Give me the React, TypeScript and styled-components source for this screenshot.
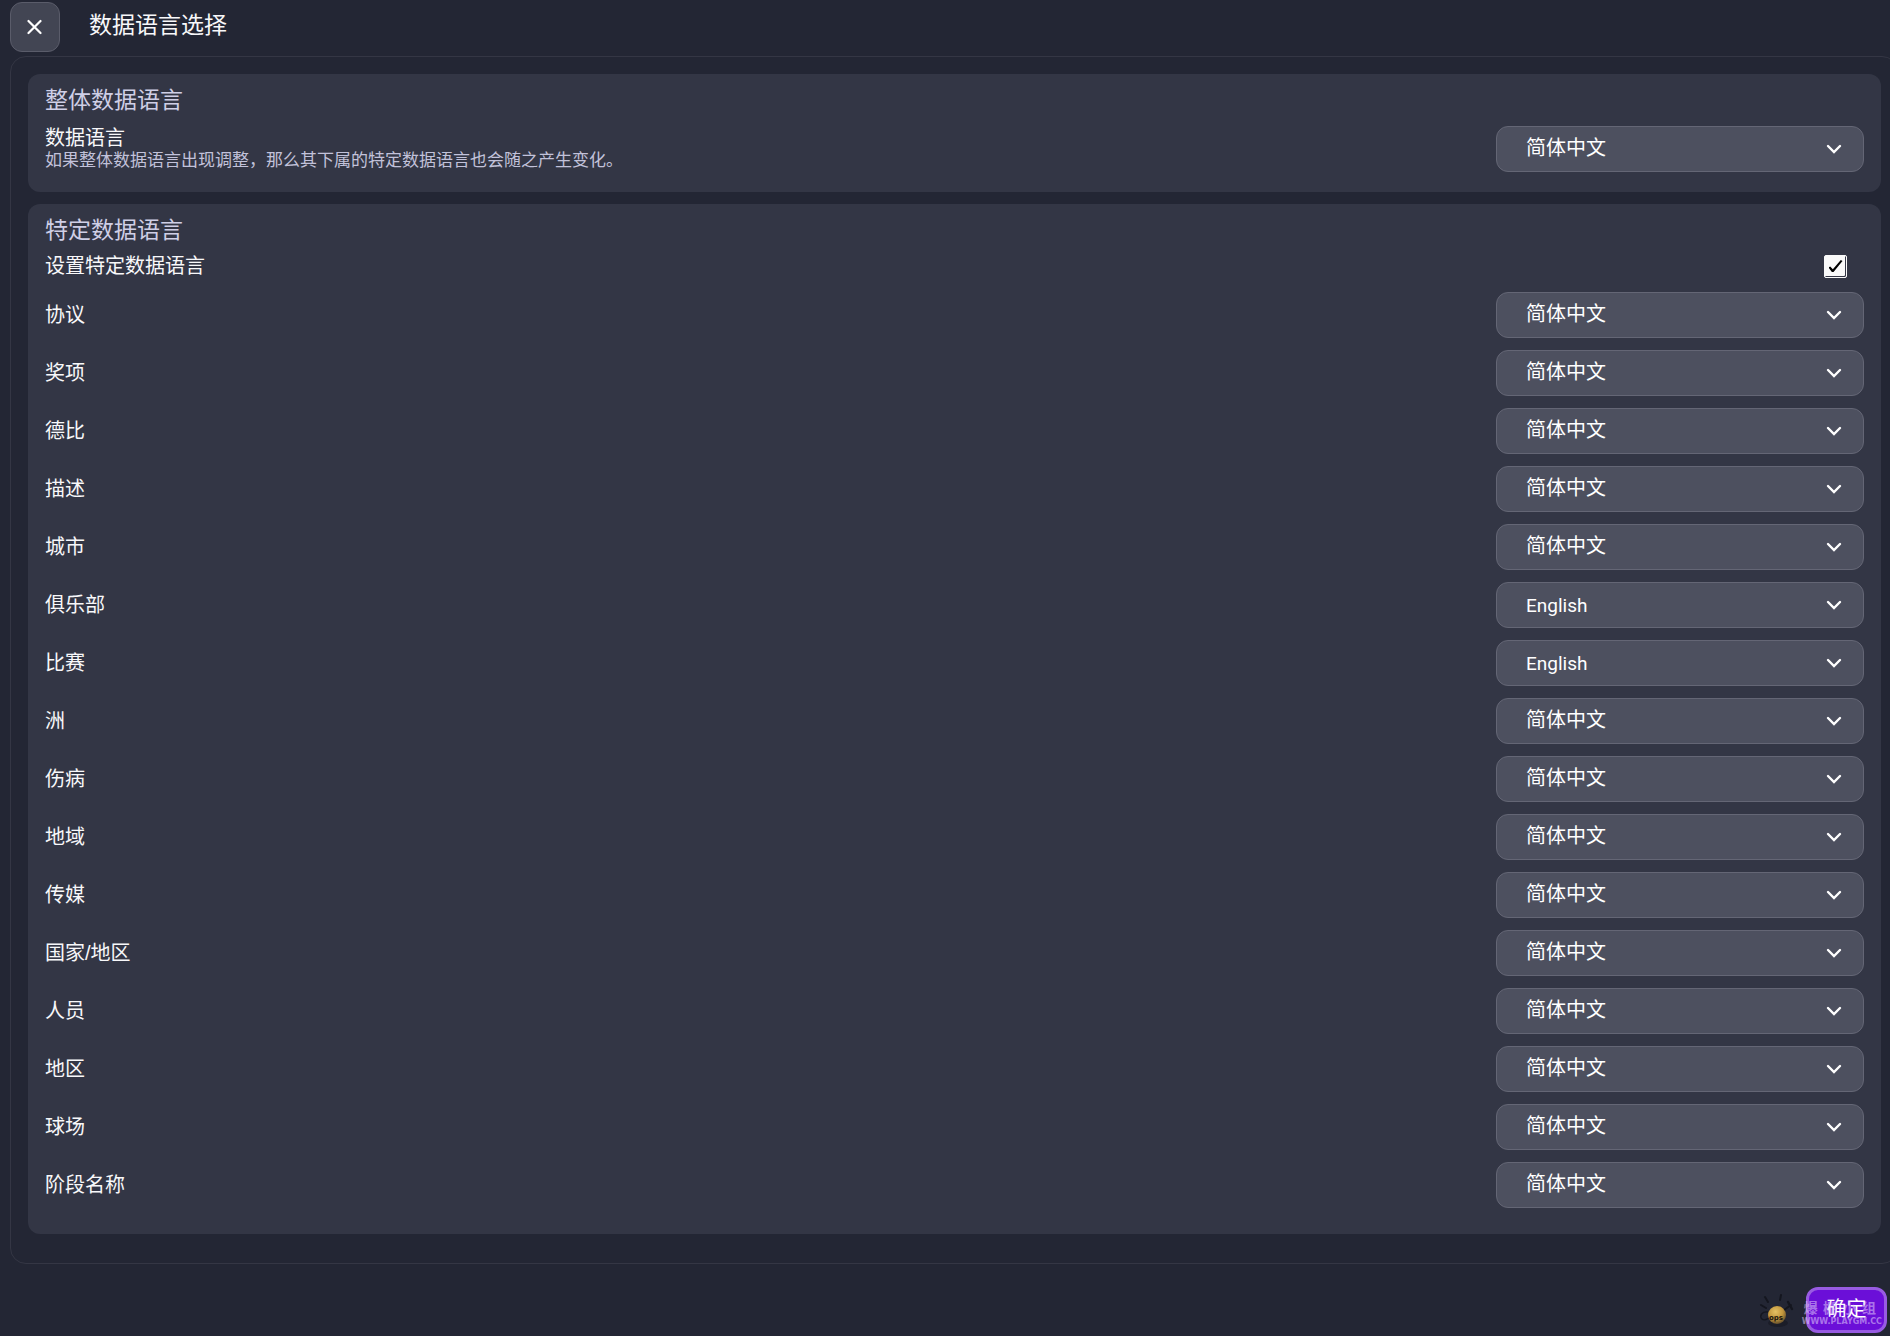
import React, { useState } from "react";
import styled, { createGlobalStyle } from "styled-components";

const GlobalStyle = createGlobalStyle`
  *, *::before, *::after { box-sizing: border-box; }
  html { background: #232634; }
  body {
    margin: 0;
    background: #232634;
    color: #f8f8fa;
    font-family: "Liberation Sans", "Noto Sans CJK SC", sans-serif;
    font-size: 20px;
    line-height: 24px;
    overflow-x: hidden;
  }
`;

const Page = styled.div`
  display: flex;
  flex-direction: column;
  min-height: 100vh;
  padding: 2px 0 0 10px;
`;

const Header = styled.header`
  display: flex;
  align-items: center;
  gap: 29px;
`;

const CloseButton = styled.button`
  display: grid;
  place-items: center;
  width: 50px;
  height: 50px;
  padding: 0;
  color: #fff;
  background: #424553;
  border: 1px solid #5a5c6a;
  border-radius: 12px;
`;

const PageTitle = styled.h1`
  margin: 0;
  padding-bottom: 4px;
  font-size: 23px;
  line-height: 28px;
  font-weight: 400;
`;

const Frame = styled.main`
  display: flex;
  flex-direction: column;
  gap: 12px;
  margin: 4px -8px 0 0;
  padding: 17px 16px 29px 17px;
  border: 1px solid #343644;
  border-radius: 16px;
`;

const Card = styled.section`
  padding: 12px 17px 20px;
  background: #333645;
  border-radius: 12px;
`;

const CardTitle = styled.h2`
  margin: 0;
  color: #cfcfe6;
  font-size: 23px;
  line-height: 28px;
  font-weight: 400;
`;

const Row = styled.div`
  display: flex;
  align-items: center;
  justify-content: space-between;
`;

const OverallRow = styled(Row)`
  padding-top: 12px;
`;

const Rows = styled.div`
  display: flex;
  flex-direction: column;
  gap: 12px;
  padding-bottom: 6px;
`;

const ToggleRow = styled(Row)`
  height: 28px;
  margin: 8px 0 12px;
  padding-right: 17px;
`;

const OverallText = styled.div`
  display: flex;
  flex-direction: column;
`;

const Description = styled.p`
  margin: 0;
  color: #c2c2da;
  font-size: 17px;
  line-height: 22px;
`;

const SelectBox = styled.div`
  display: grid;
  grid-template-columns: 1fr 38px;
  align-items: center;
  width: 368px;
  color: #fff;

  svg { grid-area: 1 / 2; pointer-events: none; }
`;

const Select = styled.select<{ $latin: boolean }>`
  grid-area: 1 / 1 / 2 / 3;
  appearance: none;
  width: 100%;
  height: 46px;
  padding: ${(p) => (p.$latin ? "0 48px 0 29px" : "0 48px 2px 29px")};
  color: inherit;
  font-family: ${(p) => (p.$latin ? "Roboto, sans-serif" : "inherit")};
  font-size: ${(p) => (p.$latin ? 19 : 20)}px;
  background: #4d505f;
  border: 1px solid #646675;
  border-radius: 12px;
`;

const Checkbox = styled.input`
  appearance: none;
  display: grid;
  place-items: center;
  width: 23px;
  height: 23px;
  margin: 0;
  background: #fafafa;
  border: 1px solid #fafafa;
  border-radius: 2px;
  box-shadow: inset -1px -1px 0 #343645;

  &:checked::before {
    content: "";
    width: 14px;
    height: 12px;
    background: #000;
    clip-path: polygon(0 62%, 12% 54%, 31% 78%, 88% 0, 100% 8%, 36% 100%, 24% 100%);
  }
`;

const Footer = styled.footer`
  display: flex;
  justify-content: flex-end;
  align-items: center;
  gap: 12px;
  margin-top: auto;
  padding: 0 3px 3px 0;
`;

const ConfirmWrap = styled.div`
  position: relative;
`;

const ConfirmButton = styled.button`
  display: block;
  width: 81px;
  height: 46px;
  padding: 0 0 6px;
  color: #fff;
  font-family: inherit;
  font-size: 20px;
  background: #6b0fd8;
  border: 3px solid #985be2;
  border-radius: 12px;
`;

const Watermark = styled.div`
  position: absolute;
  right: 5px;
  bottom: 6px;
  color: rgba(225, 205, 250, 0.55);
  white-space: nowrap;
  pointer-events: none;
`;

const WatermarkName = styled.div`
  display: flex;
  justify-content: space-between;
  padding: 0 6px 0 2px;
  font-size: 14px;
  line-height: 18px;
  font-weight: 700;
`;

const WatermarkSite = styled.div`
  font-family: "DejaVu Sans", sans-serif;
  font-size: 8px;
  line-height: 10px;
  font-weight: 700;
`;

const CHINESE = "简体中文";
const ENGLISH = "English";

const CATEGORIES: [string, string][] = [
  ["协议", CHINESE],
  ["奖项", CHINESE],
  ["德比", CHINESE],
  ["描述", CHINESE],
  ["城市", CHINESE],
  ["俱乐部", ENGLISH],
  ["比赛", ENGLISH],
  ["洲", CHINESE],
  ["伤病", CHINESE],
  ["地域", CHINESE],
  ["传媒", CHINESE],
  ["国家/地区", CHINESE],
  ["人员", CHINESE],
  ["地区", CHINESE],
  ["球场", CHINESE],
  ["阶段名称", CHINESE],
];

function LanguageSelect({ id, initial }: { id: string; initial: string }) {
  const [value, setValue] = useState(initial);
  return (
    <SelectBox>
      <Select id={id} value={value} $latin={value === ENGLISH} onChange={(e) => setValue(e.target.value)}>
        <option>{CHINESE}</option>
        <option>{ENGLISH}</option>
      </Select>
      <svg width="16" height="10" viewBox="0 0 16 10" fill="none" aria-hidden="true">
        <path d="M2 2L8 8L14 2" stroke="currentColor" strokeWidth="2.4" strokeLinecap="round" />
      </svg>
    </SelectBox>
  );
}

function Mascot() {
  return (
    <svg width="36" height="36" viewBox="0 0 36 36" fill="none" aria-hidden="true">
      <defs>
        <radialGradient id="ball" cx="42%" cy="32%" r="68%">
          <stop offset="0" stopColor="#e3c163" />
          <stop offset="0.6" stopColor="#c1953c" />
          <stop offset="1" stopColor="#66502c" />
        </radialGradient>
      </defs>
      <ellipse cx="20" cy="31" rx="10" ry="4" fill="#1b1d28" />
      <g stroke="#14161f" strokeLinecap="round">
        <path d="M3 13L8 16M7 5L10 10M23 3L22 8" strokeWidth="2" />
        <path d="M10 20C4 19 1 24 4 27C6 29 10 27 12 25" strokeWidth="1.4" />
        <path d="M26 18L33 13" strokeWidth="2" />
        <path d="M30 10L34 17" strokeWidth="2.4" />
      </g>
      <circle cx="19" cy="23" r="9" fill="url(#ball)" />
      <text x="11" y="28" fill="#17130d" fontFamily="DejaVu Sans, sans-serif" fontSize="7" fontWeight="700">ops</text>
    </svg>
  );
}

export default function App() {
  const [specific, setSpecific] = useState(true);
  return (
    <>
      <GlobalStyle />
      <Page>
        <Header>
          <CloseButton aria-label="关闭">
            <svg width="16" height="16" viewBox="0 0 16 16" aria-hidden="true">
              <path d="M1.5 2L13.5 14M13.5 2L1.5 14" stroke="currentColor" strokeWidth="2.2" strokeLinecap="round" />
            </svg>
          </CloseButton>
          <PageTitle>数据语言选择</PageTitle>
        </Header>
        <Frame>
          <Card>
            <CardTitle>整体数据语言</CardTitle>
            <OverallRow>
              <OverallText>
                <label htmlFor="overall">数据语言</label>
                <Description>如果整体数据语言出现调整，那么其下属的特定数据语言也会随之产生变化。</Description>
              </OverallText>
              <LanguageSelect id="overall" initial={CHINESE} />
            </OverallRow>
          </Card>
          <Card>
            <CardTitle>特定数据语言</CardTitle>
            <ToggleRow>
              <label htmlFor="specific">设置特定数据语言</label>
              <Checkbox id="specific" type="checkbox" checked={specific} onChange={(e) => setSpecific(e.target.checked)} />
            </ToggleRow>
            <Rows>
              {CATEGORIES.map(([name, language], i) => (
                <Row key={name}>
                  <label htmlFor={`category-${i}`}>{name}</label>
                  <LanguageSelect id={`category-${i}`} initial={language} />
                </Row>
              ))}
            </Rows>
          </Card>
        </Frame>
        <Footer>
          <Mascot />
          <ConfirmWrap>
            <ConfirmButton>确定</ConfirmButton>
            <Watermark>
              <WatermarkName>
                {[..."爆棚小组"].map((c) => (
                  <span key={c}>{c}</span>
                ))}
              </WatermarkName>
              <WatermarkSite>WWW.PLAYGM.CC</WatermarkSite>
            </Watermark>
          </ConfirmWrap>
        </Footer>
      </Page>
    </>
  );
}
